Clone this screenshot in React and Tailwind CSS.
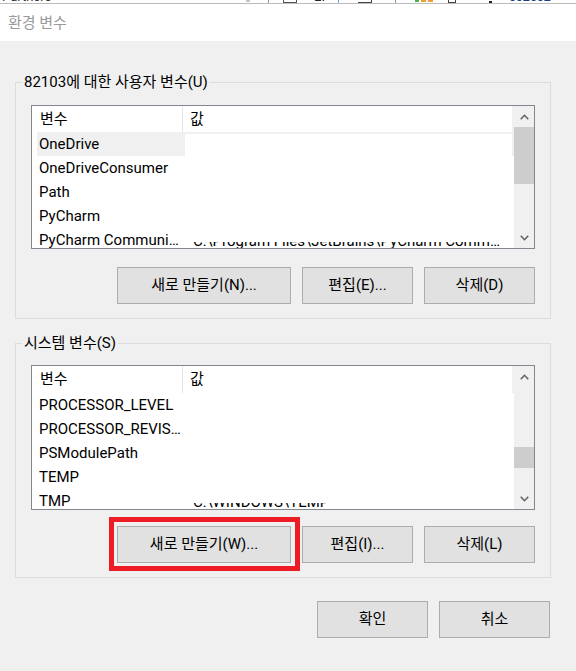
import React from "react";

const Chevron = ({ down }) => (
  <svg width="9" height="6" viewBox="0 0 9 6">
    <polyline
      points={down ? "0.75,0.75 4.5,4.75 8.25,0.75" : "0.75,5.25 4.5,1.25 8.25,5.25"}
      fill="none"
      stroke="#606060"
      strokeWidth="1.5"
    />
  </svg>
);

const Button = ({ children, width }) => (
  <button
    className={`${width} h-[37px] shrink-0 border border-[#adadad] bg-[#e1e1e1] text-[15px] text-black flex items-center justify-center`}
  >
    {children}
  </button>
);

// last row is half-painted in the screenshot: only the lower part of the value shows
const ClippedValue = ({ text }) => (
  <div className="mt-[14px] h-[10px] overflow-hidden">
    <div className="-mt-[13px] leading-[24px] whitespace-nowrap overflow-hidden text-ellipsis">
      {text}
    </div>
  </div>
);

const ListBox = ({ rows, headerH, thumbTop, thumbH, boxH }) => (
  <div
    className={`ml-[15px] w-[504px] ${boxH} border border-[#828790] bg-white flex overflow-hidden`}
  >
    <div className="flex-1 min-w-0 flex flex-col">
      <div className={`${headerH} shrink-0 flex items-center border-r-2 border-[#f0f0f0]`}>
        <div className="w-[151px] h-full pl-[8px] flex items-center border-r border-[#e5e5e5]">
          변수
        </div>
        <div className="pl-[7px]">값</div>
      </div>
      {rows.map((row) => (
        <div key={row.name} className="h-[24px] shrink-0 flex pl-[5px]">
          <div
            className={`w-[148px] shrink-0 pl-[2px] pt-[1px] leading-[23px] whitespace-nowrap ${
              row.selected ? "bg-[#f0f0f0]" : ""
            }`}
          >
            {row.name}
          </div>
          <div
            className={`flex-1 min-w-0 pl-[8px] pr-[6px] ${
              row.selected ? "border-t-2 border-r-2 border-[#f0f0f0]" : ""
            }`}
          >
            {row.clipped && <ClippedValue text={row.clipped} />}
          </div>
        </div>
      ))}
    </div>
    <div className="w-[20px] shrink-0 bg-[#f0f0f0] flex flex-col">
      <div className="h-[21px] shrink-0 flex items-center justify-center">
        <Chevron />
      </div>
      <div className="flex-1">
        <div className={`${thumbTop} ${thumbH} bg-[#cdcdcd]`} />
      </div>
      <div className="h-[21px] shrink-0 flex items-center justify-center">
        <Chevron down />
      </div>
    </div>
  </div>
);

const userRows = [
  { name: "OneDrive", selected: true },
  { name: "OneDriveConsumer" },
  { name: "Path" },
  { name: "PyCharm" },
  {
    name: "PyCharm Communi…",
    clipped: "C:\\Program Files\\JetBrains\\PyCharm Community Edition 2020.1\\bin;",
  },
];

const systemRows = [
  { name: "PROCESSOR_LEVEL" },
  { name: "PROCESSOR_REVIS…" },
  { name: "PSModulePath" },
  { name: "TEMP" },
  { name: "TMP", clipped: "C:\\WINDOWS\\TEMP" },
];

export default function App() {
  return (
    <div className="w-[576px] h-[671px] overflow-hidden bg-[#f0f0f0] flex flex-col text-black text-[15px] font-['Roboto','Noto_Sans_CJK_KR',sans-serif]">
      {/* strip of the window behind */}
      <div className="h-[4px] shrink-0 bg-white border-b border-[#bcbcbc] flex overflow-hidden text-[13px] leading-[13px] text-[#333]">
        <div className="w-[246px] shrink-0 pl-[2px] -mt-[10px]">Partners</div>
        <div className="w-[22px] shrink-0">
          <div className="w-[4px] h-[2px] bg-[#c4c4c4]" />
        </div>
        <div className="w-[15px] shrink-0 border-l border-[#9a9a9a]" />
        <div className="w-[31px] shrink-0">
          <div className="w-[14px] h-[3px] border-x border-b border-[#555]" />
        </div>
        <div className="w-[24px] shrink-0 -mt-[10px] text-[#222]">EI</div>
        <div className="w-[20px] shrink-0 border-l border-[#7aa7d8]" />
        <div className="w-[37px] shrink-0">
          <div className="w-[14px] h-[3px] border-r border-b border-[#444]" />
        </div>
        <div className="w-[20px] shrink-0 border-l border-[#9a9a9a]" />
        <div className="w-[33px] shrink-0 flex gap-[2px] items-end pb-[1px]">
          <div className="w-[4px] h-[2px] bg-[#4caf50]" />
          <div className="w-[5px] h-[2px] bg-[#f0a030]" />
          <div className="w-[5px] h-[2px] bg-[#f0a030]" />
        </div>
        <div className="w-[41px] shrink-0">
          <div className="w-[8px] h-[3px] border-x border-b border-[#444]" />
        </div>
        <div className="w-[20px] shrink-0 flex items-end">
          <div className="w-[3px] h-[2px] bg-[#222]" />
        </div>
        <div className="shrink-0 -mt-[10px] text-[#1a3f8a]">cc2cc2</div>
      </div>

      {/* title bar */}
      <div className="h-[37px] shrink-0 bg-white flex items-center pl-[8px] pt-[1px] text-[#999999]">
        환경 변수
      </div>

      <fieldset className="mt-[31px] ml-[15px] w-[536px] border border-[#dcdcdc] pb-[14px]">
        <legend className="ml-[6px] px-[2px] leading-[20px]">
          82103에 대한 사용자 변수(U)
        </legend>
        <div className="mt-[13px]">
          <ListBox
            rows={userRows}
            headerH="h-[26px]"
            thumbTop="mt-0"
            thumbH="h-[57px]"
            boxH="h-[144px]"
          />
        </div>
        <div className="mt-[18px] pr-[15px] flex justify-end gap-[11px]">
          <Button width="w-[174px]">새로 만들기(N)...</Button>
          <Button width="w-[111px]">편집(E)...</Button>
          <Button width="w-[111px]">삭제(D)</Button>
        </div>
      </fieldset>

      <fieldset className="mt-[14px] ml-[15px] w-[536px] border border-[#dcdcdc] pb-[14px]">
        <legend className="ml-[6px] px-[2px] leading-[20px]">시스템 변수(S)</legend>
        <div className="mt-[12px]">
          <ListBox
            rows={systemRows}
            headerH="h-[27px]"
            thumbTop="mt-[60px]"
            thumbH="h-[21px]"
            boxH="h-[145px]"
          />
        </div>
        <div className="mt-[16px] pr-[15px] flex justify-end gap-[11px]">
          <div className="relative">
            <Button width="w-[174px]">새로 만들기(W)...</Button>
            <div className="absolute -left-[8px] -top-[9px] w-[191px] h-[54px] border-[5px] border-[#ed1c24] pointer-events-none" />
          </div>
          <Button width="w-[111px]">편집(I)...</Button>
          <Button width="w-[111px]">삭제(L)</Button>
        </div>
      </fieldset>

      <div className="mt-[23px] ml-[15px] w-[535px] flex justify-end gap-[11px]">
        <Button width="w-[111px]">확인</Button>
        <Button width="w-[111px]">취소</Button>
      </div>
    </div>
  );
}
